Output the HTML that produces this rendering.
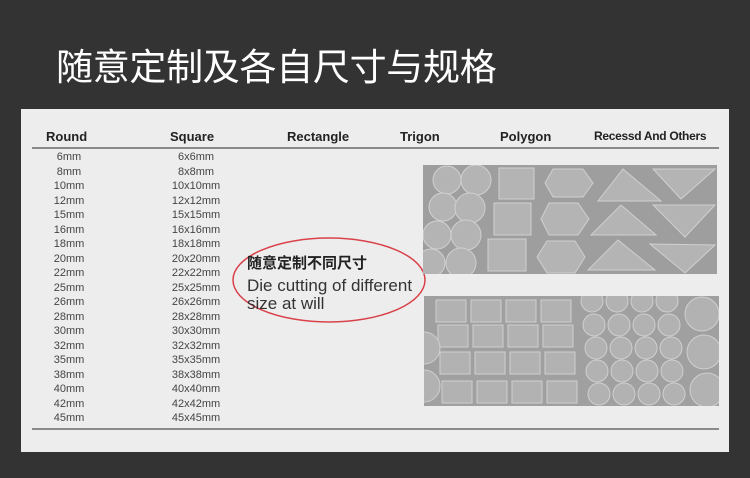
<!DOCTYPE html>
<html><head><meta charset="utf-8"><style>
body{margin:0;width:750px;height:478px;background:#333333;position:relative;overflow:hidden;font-family:"Liberation Sans",Arial,sans-serif}
.t{position:absolute;left:56px;top:37px;color:#fff;font:normal 37px "Liberation Sans","Noto Sans CJK SC",sans-serif;letter-spacing:-0.3px;white-space:nowrap}
.card{position:absolute;left:21px;top:109px;width:708px;height:343px;background:#ededed}
.h{position:absolute;top:129px;font-weight:bold;font-size:13px;color:#222;white-space:nowrap}
.ln{position:absolute;left:32px;width:687px;height:2px;background:#8a8a8a}
.r{position:absolute;font-size:11px;color:#444;white-space:nowrap;line-height:14.5px}
</style></head><body>
<div class="t">随意定制及各自尺寸与规格</div>
<div class="card"></div>
<div class="h" style="left:46px">Round</div>
<div class="h" style="left:170px">Square</div>
<div class="h" style="left:287px">Rectangle</div>
<div class="h" style="left:400px">Trigon</div>
<div class="h" style="left:500px">Polygon</div>
<div class="h" style="left:594px;font-size:12px;letter-spacing:-0.3px">Recessd And Others</div>
<div class="ln" style="top:147px"></div>
<div class="ln" style="top:428px"></div>
<div class="r" style="left:47px;top:150px;width:44px;text-align:center">6mm<br>8mm<br>10mm<br>12mm<br>15mm<br>16mm<br>18mm<br>20mm<br>22mm<br>25mm<br>26mm<br>28mm<br>30mm<br>32mm<br>35mm<br>38mm<br>40mm<br>42mm<br>45mm</div>
<div class="r" style="left:163px;top:150px;width:66px;text-align:center">6x6mm<br>8x8mm<br>10x10mm<br>12x12mm<br>15x15mm<br>16x16mm<br>18x18mm<br>20x20mm<br>22x22mm<br>25x25mm<br>26x26mm<br>28x28mm<br>30x30mm<br>32x32mm<br>35x35mm<br>38x38mm<br>40x40mm<br>42x42mm<br>45x45mm</div>
<svg style="position:absolute;left:0;top:0" width="750" height="478">
<ellipse cx="329" cy="280" rx="96" ry="42" fill="none" stroke="#d9424a" stroke-width="1.5"/>
<svg x="423" y="165" width="294" height="109" viewBox="0 0 294 109">
<rect width="294" height="109" fill="#9e9e9e"/>
<g fill="#b4b4b4" stroke="#d0d0d0" stroke-width="1">
<circle cx="24" cy="15" r="14"/><circle cx="20" cy="42" r="14"/><circle cx="14" cy="70" r="14"/><circle cx="8" cy="98" r="14"/>
<circle cx="53" cy="15" r="15"/><circle cx="47" cy="43" r="15"/><circle cx="43" cy="70" r="15"/><circle cx="38" cy="98" r="15"/>
<rect x="76" y="3" width="35" height="31"/><rect x="71" y="38" width="37" height="32"/><rect x="65" y="74" width="38" height="32"/>
<polygon points="130,4 160,4 170,18 160,32 130,32 122,18"/><polygon points="126,38 155,38 166,54 155,70 126,70 118,54"/><polygon points="124,76 152,76 162,92 152,108 124,108 114,92"/>
<polygon points="200,4 238,36 175,36"/><polygon points="198,40 233,70 168,70"/><polygon points="195,75 232,105 165,105"/>
<polygon points="230,4 292,4 258,34"/><polygon points="230,40 292,40 262,72"/><polygon points="227,79 292,80 262,108"/>
</g></svg>
<svg x="424" y="296" width="295" height="110" viewBox="0 0 295 110">
<rect width="295" height="110" fill="#a0a0a0"/>
<g fill="#b2b2b2" stroke="#cfcfcf" stroke-width="1">
<rect x="12" y="4" width="30" height="22"/><rect x="47" y="4" width="30" height="22"/><rect x="82" y="4" width="30" height="22"/><rect x="117" y="4" width="30" height="22"/>
<rect x="14" y="29" width="30" height="22"/><rect x="49" y="29" width="30" height="22"/><rect x="84" y="29" width="30" height="22"/><rect x="119" y="29" width="30" height="22"/>
<rect x="16" y="56" width="30" height="22"/><rect x="51" y="56" width="30" height="22"/><rect x="86" y="56" width="30" height="22"/><rect x="121" y="56" width="30" height="22"/>
<rect x="18" y="85" width="30" height="22"/><rect x="53" y="85" width="30" height="22"/><rect x="88" y="85" width="30" height="22"/><rect x="123" y="85" width="30" height="22"/>
<circle cx="0" cy="52" r="16"/><circle cx="0" cy="90" r="16"/>
<circle cx="168" cy="5" r="11"/><circle cx="193" cy="5" r="11"/><circle cx="218" cy="5" r="11"/><circle cx="243" cy="5" r="11"/>
<circle cx="170" cy="29" r="11"/><circle cx="195" cy="29" r="11"/><circle cx="220" cy="29" r="11"/><circle cx="245" cy="29" r="11"/>
<circle cx="172" cy="52" r="11"/><circle cx="197" cy="52" r="11"/><circle cx="222" cy="52" r="11"/><circle cx="247" cy="52" r="11"/>
<circle cx="173" cy="75" r="11"/><circle cx="198" cy="75" r="11"/><circle cx="223" cy="75" r="11"/><circle cx="248" cy="75" r="11"/>
<circle cx="175" cy="98" r="11"/><circle cx="200" cy="98" r="11"/><circle cx="225" cy="98" r="11"/><circle cx="250" cy="98" r="11"/>
<circle cx="278" cy="18" r="17"/><circle cx="280" cy="56" r="17"/><circle cx="283" cy="94" r="17"/>
</g></svg>
</svg>
<div style="position:absolute;left:247px;top:255px;font:bold 15px/18px 'Liberation Sans','Noto Sans CJK SC',sans-serif;color:#222">随意定制不同尺寸</div>
<div style="position:absolute;left:247px;top:277px;font-size:17px;color:#333;line-height:18px;white-space:nowrap">Die cutting of different<br>size at will</div>
</body></html>
